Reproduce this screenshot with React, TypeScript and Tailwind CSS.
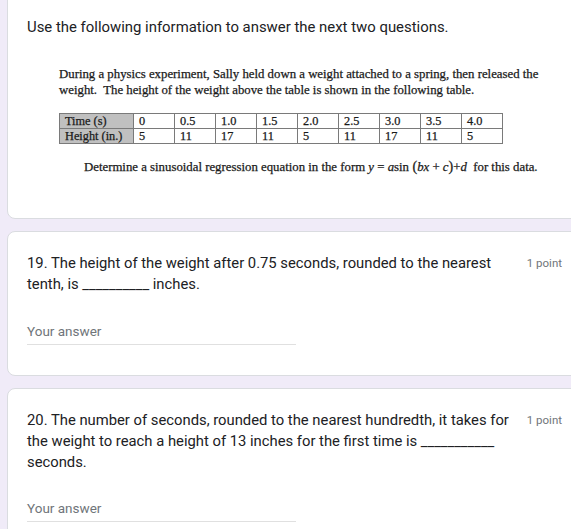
import React from "react";

const times = ["0", "0.5", "1.0", "1.5", "2.0", "2.5", "3.0", "3.5", "4.0"];
const heights = ["5", "11", "17", "11", "5", "11", "17", "11", "5"];

function Answer() {
  return (
    <div className="w-[269px] border-b border-[#e0e0e0] pb-[3px] text-[13.5px] text-[#70757a] font-['Roboto',sans-serif]">
      Your answer
    </div>
  );
}

export default function App() {
  return (
    <div className="h-[529px] w-[571px] overflow-hidden bg-[#f0ebf8] pl-[7px] font-['Roboto',sans-serif]">
      <div className="flex w-[620px] flex-col gap-[12px]">
        {/* Card 1 */}
        <div className="-mt-[12px] h-[231px] rounded-[8px] border border-[#dadce0] bg-white pl-[19px] pt-[28px]">
          <div className="text-[14.9px] leading-[20px] text-[#202124]">
            Use the following information to answer the next two questions.
          </div>
          <div className="mt-[29px] ml-[32px] w-[500px] font-['Liberation_Serif',serif] text-[#1a1a1a] [-webkit-text-stroke:0.25px_#1a1a1a]">
            <p className="text-[12.8px] leading-[16px]">
              During a physics experiment, Sally held down a weight attached to a spring, then released the weight.&nbsp; The height of the weight above the table is shown in the following table.
            </p>
            <table className="mt-[15px] border-collapse text-[12.3px] leading-[14px]">
              <tbody>
                <tr>
                  <td className="w-[74px] border border-[#7a7a7a] bg-[#c0c0c0] pl-[5px]">Time (s)</td>
                  {times.map((t, i) => (
                    <td key={i} className="w-[41px] border border-[#7a7a7a] pl-[5px]">{t}</td>
                  ))}
                </tr>
                <tr>
                  <td className="border border-[#7a7a7a] bg-[#c0c0c0] pl-[5px]">Height (in.)</td>
                  {heights.map((h, i) => (
                    <td key={i} className="border border-[#7a7a7a] pl-[5px]">{h}</td>
                  ))}
                </tr>
              </tbody>
            </table>
            <p className="mt-[15px] ml-[25px] whitespace-nowrap text-[12.8px] leading-[16px]">
              Determine a sinusoidal regression equation in the form{" "}
              <span className="italic">y</span> = <span className="italic">a</span>sin<span className="text-[14px]"> (</span><span className="italic">bx</span> + <span className="italic">c</span><span className="text-[14px]">)</span>+<span className="italic">d</span>&nbsp; for this data.
            </p>
          </div>
        </div>

        {/* Card 2 */}
        <div className="h-[145px] rounded-[8px] border border-[#dadce0] bg-white pl-[19px] pt-[21px]">
          <div className="flex w-[535px] items-start justify-between">
            <div className="w-[480px] text-[14.8px] leading-[20.5px] text-[#202124]">
              19. The height of the weight after 0.75 seconds, rounded to the nearest tenth, is __________ inches.
            </div>
            <div className="pt-[2px] text-[11.5px] text-[#70757a]">1 point</div>
          </div>
          <div className="mt-[27px]">
            <Answer />
          </div>
        </div>

        {/* Card 3 */}
        <div className="h-[200px] rounded-[8px] border border-[#dadce0] bg-white pl-[19px] pt-[21px]">
          <div className="flex w-[535px] items-start justify-between">
            <div className="w-[492px] text-[14.8px] leading-[21px] text-[#202124]">
              20. The number of seconds, rounded to the nearest hundredth, it takes for the weight to reach a height of 13 inches for the first time is ___________ seconds.
            </div>
            <div className="pt-[2px] text-[11.5px] text-[#70757a]">1 point</div>
          </div>
          <div className="mt-[25px]">
            <Answer />
          </div>
        </div>
      </div>
    </div>
  );
}
